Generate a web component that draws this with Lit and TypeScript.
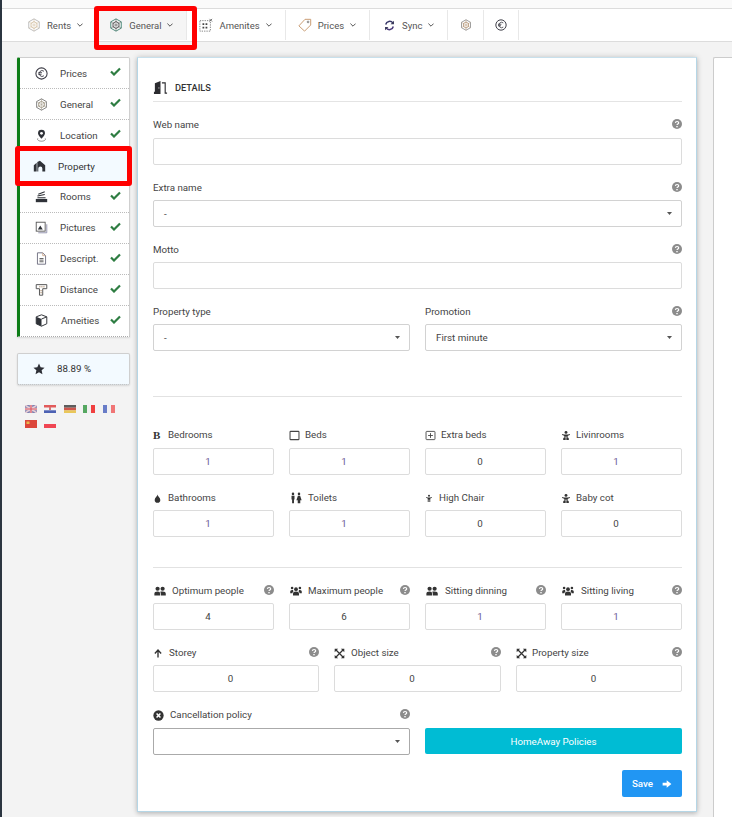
import { LitElement, html, css, svg } from "lit";
import { customElement } from "lit/decorators.js";

const I = (w: number, h: number, body: unknown, vb = "0 0 16 16") =>
  html`<svg class="ic" width=${w} height=${h} viewBox=${vb}>${body}</svg>`;

const hex = (a: string, b: string, w = 14) =>
  I(w, w, svg`<path d="M8 1l6 3.400v7.200L8 15l-6-3.400V4.400z" fill="none" stroke=${a} stroke-width="1.100"/>
  <path d="M8 4l3.400 2v4L8 12l-3.400-2V6z" fill="none" stroke=${b} stroke-width="1.100"/>
  <path d="M8 1v14M2 4.400l12 7.200M14 4.400L2 11.600" stroke=${b} stroke-width=".7" opacity=".8"/>`);
const euro = (s = 14) =>
  I(s, s, svg`<circle cx="8" cy="8" r="6.900" fill="none" stroke="#3a3a44" stroke-width="1.300"/>
  <path d="M11 5.200A3.600 3.600 0 1 0 11 10.800M4 7h4.600M4 9h4" fill="none" stroke="#3a3a44" stroke-width="1.100"/>`);
const amen = I(14, 14, svg`<rect x="1" y="3" width="12" height="12" fill="none" stroke="#777" stroke-width="1" stroke-dasharray="1.500 1.200"/>
  <path d="M4 6h2v2H4zM7.500 6h2v2h-2zM4 10h2v2H4zM7.500 10h2v2h-2z" fill="#444"/>
  <path d="M12 1l3 3M15 1l-3 3" stroke="#666" stroke-width="1"/>`);
const tag = I(14, 14, svg`<path d="M1 9l7-7.500h6.500V8L7.500 15z" fill="none" stroke="#c89a70" stroke-width="1.100"/>
  <circle cx="11.500" cy="4.500" r="1" fill="none" stroke="#666" stroke-width=".9"/>`);
const sync = html`<span class="syncbox">${I(11, 11, svg`<path d="M2.500 6.500A5.800 5.800 0 0 1 13 4.500" fill="none" stroke="#3a3a6a" stroke-width="2.200"/>
  <path d="M13.500 9.500A5.800 5.800 0 0 1 3 11.500" fill="none" stroke="#4a3a7a" stroke-width="2.200"/>
  <path d="M14.500 1v5h-5zM1.500 15v-5h5z" fill="#3a3a5a"/>`)}</span>`;
const chev = html`<svg class="chev" width="6" height="4" viewBox="0 0 6 4"><path d="M.4.600L3 3.200 5.600.600" fill="none" stroke="#555" stroke-width="1"/></svg>`;
const check = html`<svg class="chk" width="11" height="9" viewBox="0 0 11 9"><path d="M1 4.500l3 3 6-6" fill="none" stroke="#2e7d42" stroke-width="2.200"/></svg>`;
const help = html`<svg class="help" width="10" height="10" viewBox="0 0 10 10"><circle cx="5" cy="5" r="5" fill="#8c8c8c"/><path d="M3.400 3.900C3.500 2 6.700 2.100 6.700 3.800 6.700 5 5 4.900 5 6.100" fill="none" stroke="#fff" stroke-width="1.200"/><rect x="4.300" y="7" width="1.400" height="1.300" fill="#fff"/></svg>`;
const caret = html`<svg class="caret" width="5" height="3" viewBox="0 0 5 3"><path d="M0 0h5L2.500 3z" fill="#555"/></svg>`;
const D = "#2f3238";
const pin = I(14, 14, svg`<path d="M8 1a4.300 4.300 0 0 0-4.300 4.300C3.700 8 8 12 8 12s4.300-4 4.300-6.700A4.300 4.300 0 0 0 8 1z" fill=${D}/><circle cx="8" cy="5.300" r="1.700" fill="#fff"/><path d="M3.500 11.500C2 13.500 5 15 8 15s6-1.500 4.500-3.500" fill="none" stroke="#777" stroke-width="1"/>`);
const house = I(14, 14, svg`<path d="M1 14V6.500L4.500 3.300V14zM5.300 2.600L8.500 1l6.500 5.500V14h-3.500v-3.500a2.500 2.500 0 0 0-5 0V14H5.300z" fill=${D}/>`);
const rooms = I(14, 14, svg`<path d="M1 11h14v4H1z" fill=${D}/><path d="M3 9.500h10M3 7.500l9-2M4 5.200l8-3" stroke=${D} stroke-width="1.300"/>`);
const pics = I(14, 14, svg`<rect x="1.500" y="1.500" width="11" height="11" fill="none" stroke="#555" stroke-width="1.100"/><path d="M3.500 10.500l3-5 3 5z" fill=${D}/><path d="M14.500 4v10.500H4" fill="none" stroke="#8a8aa8" stroke-width="1.100"/>`);
const doc = I(14, 14, svg`<path d="M3 1h6.500L13 4.500V15H3z" fill="none" stroke="#6a6a7c" stroke-width="1.100"/><path d="M5.500 8h5M5.500 10h5M5.500 12h5" stroke="#444" stroke-width="1"/><path d="M9.500 1v3.500H13" fill="none" stroke="#c8a080" stroke-width="1"/>`);
const dist = I(14, 14, svg`<path d="M1.500 2h13v5H9.500v8H5.500V7H1.500z" fill="none" stroke="#555" stroke-width="1.200"/><path d="M6 3.500v2M8.500 3.500v2M11 3.500v2M6.500 9.500h2M6.500 12h2" stroke="#a08060" stroke-width="1"/>`);
const box = I(14, 14, svg`<path d="M8 1l6.500 2.500v8.500L8 15 1.500 12V3.500z" fill="none" stroke=${D} stroke-width="1.200"/><path d="M1.500 3.500L8 6.200V15L1.500 12z" fill=${D}/><path d="M8 6.200l6.500-2.700" stroke=${D} stroke-width="1.200"/>`);

const flag = (b: unknown) => html`<svg class="flag" width="12" height="8" viewBox="0 0 12 8">${b}</svg>`;
const tri = (a: string, b: string, c: string) => svg`<rect width="12" height="2.700" fill=${a}/><rect y="2.700" width="12" height="2.700" fill=${b}/><rect y="5.300" width="12" height="2.700" fill=${c}/>`;
const vert = (a: string, b: string, c: string) => svg`<rect width="4" height="8" fill=${a}/><rect x="4" width="4" height="8" fill=${b}/><rect x="8" width="4" height="8" fill=${c}/>`;
const flags = [
  flag(svg`<rect width="12" height="8" fill="#6a70a8"/><path d="M0 0l12 8M12 0L0 8" stroke="#e8c8d0" stroke-width="1.500"/><path d="M6 0v8M0 4h12" stroke="#e8c8d0" stroke-width="2.400"/><path d="M6 0v8M0 4h12" stroke="#d8404c" stroke-width="1.200"/>`),
  flag(svg`${tri("#e04040", "#f4f4f4", "#3048a8")}<rect x="5" y="2" width="2" height="3" fill="#d06060"/>`),
  flag(tri("#444", "#c83a30", "#e8c040")),
  flag(vert("#3a9a48", "#f0f0f0", "#f02020")),
  flag(vert("#5068c0", "#f0f0f4", "#f06060")),
  flag(svg`<rect width="12" height="8" fill="#d8281c"/><rect x="1.500" y="1.500" width="3" height="2.500" fill="#e8b030"/>`),
  flag(svg`<rect width="12" height="4" fill="#f4f4f4"/><rect y="4" width="12" height="4" fill="#f02838"/>`),
];

const bold = html`<span class="bold">B</span>`;
const sq = I(11, 11, svg`<rect x="1.500" y="2" width="13" height="12" rx="1" fill="none" stroke="#444" stroke-width="1.500"/>`);
const plusSq = I(11, 11, svg`<rect x="1.500" y="2" width="13" height="12" rx="1" fill="none" stroke="#444" stroke-width="1.300"/><path d="M8 4.500v7M4.500 8h7" stroke="#444" stroke-width="1.300"/>`);
const tint = I(9, 11, svg`<path d="M8 1c0 3 5 5.500 5 9.500a5 5 0 0 1-10 0C3 6.500 8 4 8 1z" fill="#333"/>`);
const wc = I(14, 12, svg`<circle cx="4" cy="2.500" r="1.700" fill="#333"/><path d="M2 5h4v5H5.300v5H2.800v-5H2z" fill="#333"/><circle cx="12" cy="2.500" r="1.700" fill="#333"/><path d="M10.500 5h3l2 6h-1.800v4h-3.400v-4H8.500z" fill="#333"/>`);
const baby = I(10, 11, svg`<circle cx="8" cy="3" r="2.300" fill="#333"/><path d="M1.500 5.500L5 6.500h6l3.500-1-.5 1.800-3 1.200V10H5V8.500L2 7.300zM5 10.800h2.500V15H3.500v-2.300zM8.500 10.800H11l1.500 2V15h-4z" fill="#333"/>`);
const male = I(8, 11, svg`<circle cx="8" cy="2.500" r="2" fill="#333"/><path d="M2.500 5l3 1H10.500l3-1 .3 1.500-3.300 1.500v7H8.700v-5H7.300v5H5.500V8L2.200 6.500z" fill="#333"/>`);
const users2 = I(14, 12, svg`<circle cx="4.800" cy="5" r="2.800" fill="#333"/><circle cx="11.500" cy="5" r="2.800" fill="#333"/><path d="M.5 14v-2.500C.5 9.500 2 8.500 4.800 8.500S8 9.500 8 11.500V14zM9 14v-2.500c0-1-.3-1.800-.8-2.400.8-.4 1.900-.6 3.300-.6 2.800 0 4.200 1 4.200 3V14z" fill="#333"/>`);
const users3 = I(14, 12, svg`<circle cx="8" cy="5.500" r="2.500" fill="#333"/><circle cx="2.800" cy="4" r="1.700" fill="#333"/><circle cx="13.200" cy="4" r="1.700" fill="#333"/><path d="M4 14v-2.500C4 9.500 5.500 8.500 8 8.500s4 1 4 3V14zM.3 11V9c0-1.500 1-2.500 2.500-2.500.6 0 1 .1 1.300.3A3.600 3.600 0 0 0 4.600 8.500C3.700 9 3.300 10 3.200 11zM15.700 11V9c0-1.500-1-2.500-2.500-2.500-.6 0-1 .1-1.300.3.100.6 0 1.200-.5 1.700.9.500 1.300 1.500 1.400 2.500z" fill="#333"/>`);
const up = I(10, 11, svg`<path d="M8 14.500V3M3 8l5-5.500L13 8" fill="none" stroke="#333" stroke-width="2.200"/>`);
const expand = I(11, 11, svg`<path d="M1 1h5L1 6zM15 1h-5l5 5zM1 15h5l-5-5zM15 15h-5l5-5z" fill="#333"/><path d="M3 3l10 10M13 3L3 13" stroke="#333" stroke-width="1.800"/>`);
const timesC = I(11, 11, svg`<circle cx="8" cy="8" r="7.500" fill="#333"/><path d="M5.200 5.200l5.600 5.600M10.800 5.200l-5.600 5.600" stroke="#fff" stroke-width="2.200"/>`);
const door = I(15, 15, svg`<path d="M1 12.500h1V3.500L8 1v14H1z" fill="#2c2c30"/><rect x="5.800" y="8" width="1" height="1" fill="#fff"/><path d="M9.500 3h3.500v11h2" fill="none" stroke="#2c2c30" stroke-width="1.200"/>`);
const arrow = I(10, 10, svg`<path d="M1 5.800h6.500V2L15 8l-7.500 6v-3.800H1z" fill="#fff"/>`);
const star = I(12, 12, svg`<path d="M8 .8l2.200 4.800 5.200.6-3.900 3.500 1.100 5.200L8 12.300l-4.600 2.600 1.100-5.200L.6 6.200l5.200-.6z" fill="#2d2f36"/>`);

const navItems: [unknown, string, boolean, string?][] = [
  [hex("#bbb", "#d6c4a8"), "Rents", true],
  [hex("#4a8a7a", "#555"), "General", true, "hov"],
  [amen, "Amenites", true],
  [tag, "Prices", true],
  [sync, "Sync", true],
  [hex("#8a8a8a", "#b09070", 12), "", false],
  [euro(12), "", false, "last"],
];
const sideItems: [unknown, string, string?][] = [
  [euro(), "Prices"],
  [hex("#777", "#99907c"), "General"],
  [pin, "Location"],
  [house, "Property", "active"],
  [rooms, "Rooms", "up"],
  [pics, "Pictures", "up"],
  [doc, "Descript.", "up"],
  [dist, "Distance", "up"],
  [box, "Ameities", "up shift"],
];

type Opts = { icon?: unknown; slot?: number; help?: boolean; value?: string; select?: boolean; cls?: string };
const field = (label: unknown, opts: Opts = {}) => html`
  <div class="field ${opts.cls ?? ""}">
    <div class="lab">
      ${opts.icon ? html`<span class="li" style="width:${opts.slot ?? 15}px">${opts.icon}</span>` : ""}
      <span class="lt">${label}</span>
      ${opts.help ? help : ""}
    </div>
    ${opts.select
      ? html`<div class="inp sel ${opts.value === undefined ? "strong" : ""}"><span>${opts.value ?? ""}</span>${caret}</div>`
      : html`<div class="inp ${opts.value !== undefined ? "num" : ""} ${opts.value === "1" ? "vio" : ""}">${opts.value ?? ""}</div>`}
  </div>`;

@customElement("app-root")
export class AppRoot extends LitElement {
  static styles = css`
    :host { display: block; width: 732px; height: 817px; overflow: hidden; position: relative; background: #f3f3f3; font-family: Roboto, sans-serif; font-size: 9.75px; color: #444; }
    * { box-sizing: border-box; }
    svg { display: block; flex: none; }
    .strip { position: absolute; left: 0; top: 0; bottom: 0; width: 2px; background: #2b3540; }
    .topgap { background: #fafafa; border-bottom: 1px solid #dcdcdc; height: 9px; }
    nav { height: 33px; background: #fff; border-bottom: 1px solid #dcdcdc; display: flex; padding-left: 15px; font-size: 9.500px; }
    .ni { display: flex; align-items: center; padding: 0 13px 0 12px; border-right: 1px solid #e8e8e8; color: #555; margin: 1px 0; }
    .ni.bare { padding: 0 11px 0 12px; }
    .ni.last { padding-left: 11px; }
    .ni.hov { background: #f5f5f5; }
    .ni .t { margin-left: 6px; }
    .ni .chev { margin-left: 6px; }
    .syncbox { width: 14px; display: flex; justify-content: center; }
    .main { display: flex; padding: 15px 0 0 17px; align-items: flex-start; }
    .left { width: 113px; flex: none; margin-right: 7px; }
    .side { background: #fff; border: 1px solid #cfcfcf; border-left: 3px solid #0c7c16; border-bottom: 1px dotted #aaa; box-shadow: 0 1px 2px rgba(0,0,0,.12); height: 280px; border-radius: 2px 2px 0 0; }
    .si { height: 31px; display: flex; align-items: center; padding-left: 15px; border-bottom: 1px dotted #bbb; color: #444; position: relative; }
    .si:last-child { border-bottom: none; }
    .si.up { padding-bottom: 2px; }
    .si.up:last-child { padding-bottom: 3px; }
    .si .ic { width: 13px; height: 13px; }
    .si .t { margin-left: 12px; }
    .si .chk { position: absolute; right: 8px; top: 9px; }
    .si.active { background: #f3faff; padding-left: 13px; }
    .si.active .t { color: #333; }
    .si.shift .t { margin-left: 13px; }
    .score { margin-top: 16px; height: 32px; background: #f3faff; border: 1px solid #cfcfcf; border-bottom: 1px dotted #aaa; box-shadow: 0 1px 2px rgba(0,0,0,.12); border-radius: 2px; display: flex; align-items: center; padding: 0 0 1px 15px; color: #333; }
    .score .t { margin-left: 12px; }
    .flags { display: flex; flex-wrap: wrap; gap: 7px 7.400px; padding: 20px 8px 0; width: 113px; }
    .flag { opacity: .85; }
    .card { width: 560px; height: 755px; background: #fff; border: 1px solid #b5d6e6; border-top-color: #c8e0ec; box-shadow: 0 0 6px rgba(0,0,0,.18), 0 2px 4px rgba(0,0,0,.12); padding: 22px 14px 0 15px; flex: none; }
    .next { flex: none; width: 40px; height: 780px; margin-left: 16px; background: #fff; border: 1px solid #ccc; border-right: none; border-radius: 2px 0 0 0; }
    .head { height: 22px; display: flex; align-items: flex-start; border-bottom: 1px solid #e4e4e4; font-weight: 500; font-size: 9.250px; color: #333; gap: 7px; line-height: 15px; }
    .f { margin-top: 15px; display: flex; flex-direction: column; gap: 14px; }
    .field { display: flex; flex-direction: column; min-width: 0; }
    .lab { height: 14px; line-height: 14px; padding-top: 2px; margin-bottom: 7px; display: flex; align-items: center; color: #444; white-space: nowrap; }
    .f > .field:not(:first-child) .lab, .f .two .lab { padding-top: 4px; }
    .li { display: flex; flex: none; }
    .lt { flex: 1; }
    .help { margin-top: -2px; }
    .tight .lab { margin-bottom: 6px; }
    .inp { height: 27px; border: 1px solid #dcdcdc; border-radius: 2px; background: #fff; display: flex; align-items: center; padding: 0 10px; color: #444; }
    .inp.num { justify-content: center; padding-right: 21px; }
    .inp.vio { color: #6a5a94; }
    .sel { justify-content: space-between; border-color: #d2d2d2; padding-right: 9px; }
    .sel.strong { border-color: #aaa; }
    .two { display: grid; grid-template-columns: 257px 257px; gap: 15px; }
    .four { display: grid; grid-template-columns: repeat(4, 121px); gap: 15px; }
    .three { display: grid; grid-template-columns: 166px 167px 166px; gap: 15px; }
    hr { border: none; border-top: 1px solid #e2e2e2; margin: 0; }
    .bold { font: 700 11px "Liberation Serif", serif; color: #333; width: 9px; line-height: 11px; }
    .hr1 { margin-top: 45px; }
    .sec2 { margin-top: 30px; display: flex; flex-direction: column; gap: 15px; }
    .hr2 { margin-top: 30px; }
    .sec3 { margin-top: 15px; display: flex; flex-direction: column; gap: 15px; }
    .hb { height: 26px; background: #00bcd4; color: #fff; border-radius: 2px; display: flex; align-items: center; justify-content: center; font-weight: 400; }
    .alignb { align-self: end; margin-bottom: 1px; }
    .save { margin: 15px 0 0 auto; width: 60px; height: 27px; background: #2196f3; color: #fff; border-radius: 2px; display: flex; align-items: center; justify-content: center; gap: 9px; font-weight: 500; }
    .mark { position: absolute; border: 5px solid #f00; border-radius: 3px; pointer-events: none; }
    .m1 { left: 94px; top: 6px; width: 103px; height: 44px; }
    .m2 { left: 15px; top: 146px; width: 117px; height: 40px; }
  `;

  render() {
    return html`
      <div class="topgap"></div>
      <nav>
        ${navItems.map(([ic, t, c, cls]) => html`<div class="ni ${cls ?? ""} ${t ? "" : "bare"}">${ic}${t ? html`<span class="t">${t}</span>` : ""}${c ? chev : ""}</div>`)}
      </nav>
      <div class="main">
        <div class="left">
          <div class="side">
            ${sideItems.map(([ic, t, cls]) => html`<div class="si ${cls ?? ""}">${ic}<span class="t">${t}</span>${cls === "active" ? "" : check}</div>`)}
          </div>
          <div class="score">${star}<span class="t">88.89 %</span></div>
          <div class="flags">${flags}</div>
        </div>
        <div class="card">
          <div class="head">${door}<span>DETAILS</span></div>
          <div class="f">
            ${field("Web name", { help: true })}
            ${field("Extra name", { help: true, select: true, value: "-" })}
            ${field("Motto", { help: true })}
            <div class="two">
              ${field("Property type", { select: true, value: "-" })}
              ${field("Promotion", { help: true, select: true, value: "First minute" })}
            </div>
          </div>
          <hr class="hr1" />
          <div class="sec2">
            <div class="four">
              ${field("Bedrooms", { icon: bold, value: "1" })}
              ${field("Beds", { icon: sq, slot: 16, value: "1" })}
              ${field("Extra beds", { icon: plusSq, slot: 16, value: "0" })}
              ${field("Livinrooms", { icon: baby, value: "1" })}
            </div>
            <div class="four">
              ${field("Bathrooms", { icon: tint, value: "1", cls: "tight" })}
              ${field("Toilets", { icon: wc, slot: 19, value: "1", cls: "tight" })}
              ${field("High Chair", { icon: male, slot: 14, value: "0", cls: "tight" })}
              ${field("Baby cot", { icon: baby, value: "0", cls: "tight" })}
            </div>
          </div>
          <hr class="hr2" />
          <div class="sec3">
            <div class="four">
              ${field("Optimum people", { icon: users2, slot: 19, help: true, value: "4", cls: "tight" })}
              ${field("Maximum people", { icon: users3, slot: 19, help: true, value: "6", cls: "tight" })}
              ${field("Sitting dinning", { icon: users2, slot: 20, help: true, value: "1", cls: "tight" })}
              ${field("Sitting living", { icon: users3, slot: 20, help: true, value: "1", cls: "tight" })}
            </div>
            <div class="three">
              ${field("Storey", { icon: up, slot: 16, help: true, value: "0", cls: "tight" })}
              ${field("Object size", { icon: expand, slot: 17, help: true, value: "0", cls: "tight" })}
              ${field("Property size", { icon: expand, slot: 16, help: true, value: "0", cls: "tight" })}
            </div>
            <div class="two">
              ${field("Cancellation policy", { icon: timesC, slot: 17, help: true, select: true })}
              <div class="hb alignb">HomeAway Policies</div>
            </div>
          </div>
          <div class="save">Save ${arrow}</div>
        </div>
        <div class="next"></div>
      </div>
      <div class="strip"></div>
      <div class="mark m1"></div>
      <div class="mark m2"></div>
    `;
  }
}
